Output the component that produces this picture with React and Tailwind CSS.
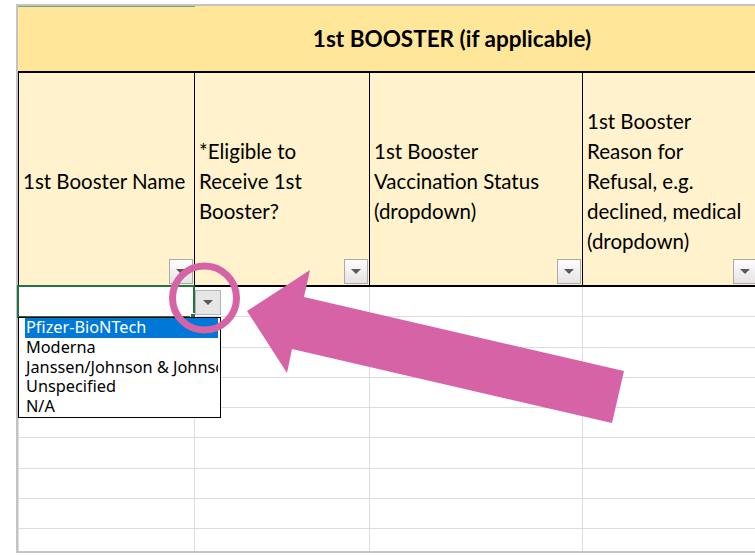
import React from "react";

const headers = [
  { w: "w-[176px]", lines: ["1st Booster Name"] },
  { w: "w-[175px]", lines: ["*Eligible to", "Receive 1st", "Booster?"] },
  { w: "w-[213px]", lines: ["1st Booster", "Vaccination Status", "(dropdown)"] },
  {
    w: "w-[176px]",
    lines: ["1st Booster", "Reason for", "Refusal, e.g.", "declined, medical", "(dropdown)"],
  },
  { w: "w-[160px]", lines: [""] },
];

const vaccines = ["Pfizer-BioNTech", "Moderna", "Janssen/Johnson & Johnson", "Unspecified", "N/A"];

const Caret = () => (
  <span className="block w-0 h-0 border-l-[5px] border-r-[5px] border-t-[5px] border-l-transparent border-r-transparent border-t-[#5a5a5a]" />
);

const FilterButton = () => (
  <div className="absolute right-[1px] bottom-[1px] w-[24px] h-[25px] border border-[#ababab] bg-gradient-to-b from-[#fdfdfd] to-[#e4e4e4] flex items-center justify-center">
    <Caret />
  </div>
);

const HeaderCell = ({ w, lines }) => (
  <div className={`relative ${w} shrink-0 h-full border-r border-black bg-[#fff2cc] flex items-center pl-[4px] overflow-hidden`}>
    <div className="text-[20.5px] leading-[30px] text-black pt-[3px]">
      {lines.map((l, i) => (
        <div key={i} className="whitespace-nowrap">
          {l}
        </div>
      ))}
    </div>
    <FilterButton />
  </div>
);

const BodyRow = () => (
  <div className="flex h-[30.25px] shrink-0 border-b border-[#dcdcdc]">
    {headers.map((h, i) => (
      <div key={i} className={`${h.w} shrink-0 h-full border-r border-[#dcdcdc]`} />
    ))}
  </div>
);

export default function App() {
  return (
    <div className="relative w-[755px] h-[555px] overflow-hidden bg-white font-['Lato',sans-serif]">
      <div className="pt-[4px] pl-[16px]">
        <div className="w-[940px] border-l-2 border-t-2 border-b-2 border-[#c4c4c4] flex flex-col">
          {/* merged title band */}
          <div className="relative h-[67px] bg-[#ffe699] border-b-2 border-black flex items-center">
            <div className="absolute left-0 top-0 w-[177px] h-[1px] bg-[#6aa57c]" />
            <div className="w-[868px] text-center text-[22.5px] font-bold text-black pt-[1px]">
              1st BOOSTER (if applicable)
            </div>
          </div>

          {/* column headers */}
          <div className="flex h-[214px] border-b-2 border-black border-l border-l-black">
            {headers.map((h, i) => (
              <HeaderCell key={i} {...h} />
            ))}
          </div>

          {/* empty grid */}
          <div className="h-[264px] overflow-hidden flex flex-col border-l border-[#dcdcdc]">
            {Array.from({ length: 9 }).map((_, i) => (
              <BodyRow key={i} />
            ))}
          </div>
        </div>
      </div>

      {/* active cell */}
      <div className="absolute left-[17px] top-[285px] w-[178px] h-[33px] border-2 border-[#217346]" />
      <div className="absolute left-[190px] top-[313px] w-[6px] h-[6px] bg-[#217346] border border-white" />

      {/* validation dropdown button */}
      <div className="absolute left-[195px] top-[290px] w-[26px] h-[25px] border border-[#b4b4b4] bg-[#e6e6e6] flex items-center justify-center">
        <Caret />
      </div>

      {/* validation list */}
      <div className="absolute left-[18px] top-[317px] w-[203px] h-[101px] border border-black bg-white overflow-hidden font-['Noto_Sans',sans-serif] text-[16.3px] leading-[19.75px] text-black">
        {vaccines.map((v, i) => (
          <div
            key={v}
            className={`ml-[6px] mr-[2px] pl-[1px] h-[19.75px] whitespace-nowrap overflow-hidden ${
              i === 0 ? "bg-[#0078d7] text-white" : ""
            }`}
          >
            {v}
          </div>
        ))}
      </div>

      {/* callout */}
      <svg className="absolute left-0 top-0 pointer-events-none" width="755" height="555" viewBox="0 0 755 555">
        <circle cx="204.5" cy="298" r="32" fill="none" stroke="#d663a5" strokeWidth="7" />
        <polygon
          points="247,311 310,270 304,297 624,371 612,423 292,349 287,373"
          fill="#d663a5"
        />
      </svg>
    </div>
  );
}
